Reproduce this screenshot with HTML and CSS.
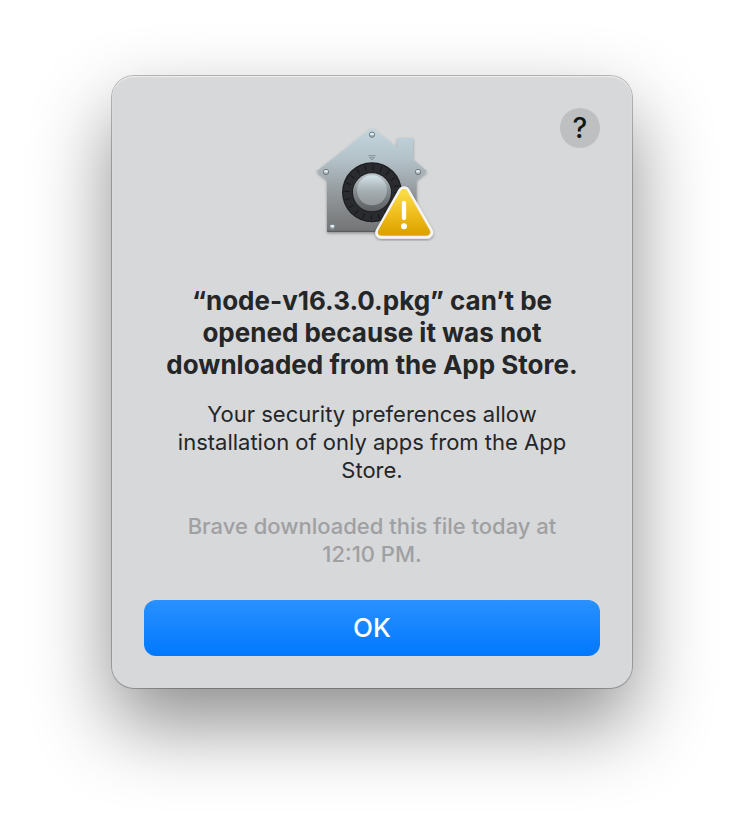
FILE: index.html
```html
<!DOCTYPE html>
<html lang="en">
<head>
    <meta charset="UTF-8">
    <meta name="viewport" content="width=device-width, initial-scale=1.0">
    <title>Security Alert</title>
    <link rel="stylesheet" href="styles.css">
</head>
<body>

    <main class="dialog" role="alertdialog" aria-labelledby="alertTitle" aria-describedby="alertText">
        <button class="help" type="button" aria-label="Help">?</button>

        <svg class="icon" viewBox="-6 0 408 396" aria-hidden="true">
            <defs>
                <linearGradient id="house" x1="0" y1="0" x2="0" y2="1">
                    <stop offset="0" stop-color="#c3d6de"/>
                    <stop offset="0.3" stop-color="#b3c2c9"/>
                    <stop offset="0.6" stop-color="#969ca0"/>
                    <stop offset="1" stop-color="#727374"/>
                </linearGradient>
                <linearGradient id="rim" x1="0" y1="0" x2="0" y2="1">
                    <stop offset="0" stop-color="#bcc6cb"/>
                    <stop offset="0.5" stop-color="#82888c"/>
                    <stop offset="1" stop-color="#5b5e60"/>
                </linearGradient>
                <linearGradient id="knob" x1="0" y1="0" x2="0" y2="1">
                    <stop offset="0" stop-color="#d3e2e9"/>
                    <stop offset="0.5" stop-color="#a5afb4"/>
                    <stop offset="1" stop-color="#92979a"/>
                </linearGradient>
                <linearGradient id="warning" x1="0" y1="0" x2="0" y2="1">
                    <stop offset="0" stop-color="#f9dc45"/>
                    <stop offset="0.55" stop-color="#efbd1d"/>
                    <stop offset="1" stop-color="#dda400"/>
                </linearGradient>
                <filter id="shade" x="-20%" y="-20%" width="140%" height="140%">
                    <feDropShadow dx="0" dy="4" stdDeviation="4" flood-color="#000" flood-opacity="0.35"/>
                </filter>
            </defs>

            <!-- house -->
            <path d="M198 36 L274 95 V66 H321 V130 L363 166 L332 191 V348 H63 V191 L32 166 Z" fill="url(#house)" filter="url(#shade)"/>
            <path d="M64 346 H331" stroke="#55585a" stroke-width="3"/>
            <path d="M187 119 H209 M191 124 L198 132 L205 124 Z" fill="none" stroke="#87939a" stroke-width="3"/>

            <!-- screws -->
            <g fill="#aab5ba" stroke="#717c83" stroke-width="3">
                <circle cx="198" cy="56" r="8"/>
                <circle cx="60" cy="168" r="8"/>
                <circle cx="336" cy="168" r="8"/>
                <circle cx="79" cy="332" r="8"/>
            </g>
            <g stroke="#e6edf0" stroke-width="6" stroke-linecap="round">
                <path d="M195 54 H201 M57 166 H63 M333 166 H339 M76 330 H82"/>
            </g>

            <!-- dial -->
            <circle cx="198" cy="229" r="90" fill="#1d1f21"/>
            <circle cx="198" cy="229" r="73" fill="none" stroke="#292b2e" stroke-width="26"/>
            <circle cx="198" cy="229" r="75" fill="none" stroke="#15171a" stroke-width="16" stroke-dasharray="3 20.56"/>
            <circle cx="198" cy="229" r="57" fill="url(#rim)"/>
            <circle cx="198" cy="223" r="45" fill="url(#knob)"/>

            <!-- warning badge -->
            <path d="M294 229 L363 350 H226 Z" fill="#f4f4f5" stroke="#f4f4f5" stroke-width="37" stroke-linejoin="round" filter="url(#shade)"/>
            <path d="M294 230 L361 348 H227 Z" fill="url(#warning)" stroke="url(#warning)" stroke-width="23" stroke-linejoin="round"/>
            <path d="M294 261 V306" stroke="#fff" stroke-width="13" stroke-linecap="round"/>
            <circle cx="294" cy="331" r="9" fill="#fff"/>
        </svg>

        <h1 class="title" id="alertTitle">“node-v16.3.0.pkg” can’t be opened because it was not downloaded from the App Store.</h1>
        <div class="text" id="alertText">
            <p>Your security preferences allow installation of only apps from the App Store.</p>
            <p class="muted">Brave downloaded this file today at 12:10 PM.</p>
        </div>
        <button class="ok" type="button">OK</button>
    </main>

</body>
</html>
```

FILE: styles.css
```css
* {
    box-sizing: border-box;
}
body {
    min-height: 100vh;
    margin: 0;
    padding: 76px 16px;
    background: #fff;
    color: #242628;
    font-family: Inter, "Liberation Sans", sans-serif;
}
.dialog {
    position: relative;
    display: flex;
    flex-direction: column;
    align-items: center;
    max-width: 520px;
    margin: 0 auto;
    padding: 40px 32px 32px;
    background: #d7d8da;
    border-radius: 22px;
    box-shadow: inset 0 1px 1px #f0f0f0, 0 0 0 1px rgba(0, 0, 0, 0.25), 0 36px 80px rgba(0, 0, 0, 0.45);
    text-align: center;
}
/* Sits in the corner, beside the icon */
.help {
    position: absolute;
    top: 32px;
    right: 32px;
    width: 40px;
    height: 40px;
    padding: 0;
    border: none;
    border-radius: 50%;
    background: #bebfc1;
    color: #141516;
    font: 500 28px/40px Inter, "Liberation Sans", sans-serif;
}
.icon {
    width: 136px;
    height: 132px;
}
.title {
    margin: 37px 0 19px;
    font-size: 26px;
    font-weight: 700;
    line-height: 32px;
}
.text {
    padding: 0 24px;
    font-size: 22px;
    line-height: 28px;
}
.text p {
    margin: 0 0 28px;
}
.text .muted {
    margin-bottom: 32px;
    color: #9fa0a2;
    font-weight: 500;
}
.ok {
    width: 100%;
    height: 56px;
    border: none;
    border-radius: 12px;
    background: linear-gradient(#2a91ff, #0078ff);
    color: #fff;
    font: 500 26px/32px Inter, "Liberation Sans", sans-serif;
}
```
